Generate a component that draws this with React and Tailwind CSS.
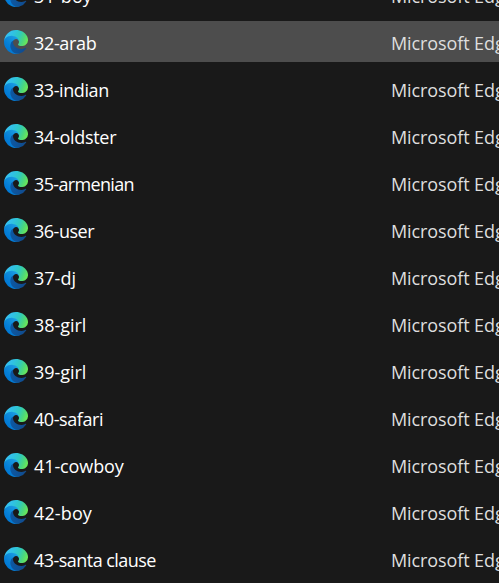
const rows = [
  { name: '31-boy', tracking: 'tracking-[0.13px]' },
  { name: '32-arab', tracking: 'tracking-[-0.35px]', selected: true },
  { name: '33-indian', tracking: 'tracking-[-0.42px]' },
  { name: '34-oldster', tracking: 'tracking-[-0.3px]' },
  { name: '35-armenian', tracking: 'tracking-[-0.65px]' },
  { name: '36-user', tracking: 'tracking-[-0.48px]' },
  { name: '37-dj', tracking: 'tracking-[0px]' },
  { name: '38-girl', tracking: 'tracking-[-0.05px]' },
  { name: '39-girl', tracking: 'tracking-[-0.05px]' },
  { name: '40-safari', tracking: 'tracking-[-0.42px]' },
  { name: '41-cowboy', tracking: 'tracking-[-0.1px]' },
  { name: '42-boy', tracking: 'tracking-[0.13px]' },
  { name: '43-santa clause', tracking: 'tracking-[-0.54px]' },
];

function EdgeDefs() {
  return (
    <svg className="absolute size-0" aria-hidden="true">
      <defs>
        <linearGradient id="edge-dark" gradientUnits="userSpaceOnUse" x1="63" y1="177" x2="241" y2="177">
          <stop offset="0" stopColor="#0c59a4" />
          <stop offset="1" stopColor="#114a8b" />
        </linearGradient>
        <linearGradient id="edge-blue" gradientUnits="userSpaceOnUse" x1="157" y1="105" x2="46" y2="226">
          <stop offset="0" stopColor="#1b9de2" />
          <stop offset="0.16" stopColor="#1595df" />
          <stop offset="0.67" stopColor="#0680d7" />
          <stop offset="1" stopColor="#0078d4" />
        </linearGradient>
        <linearGradient id="edge-teal" gradientUnits="userSpaceOnUse" x1="40" y1="50" x2="245" y2="135">
          <stop offset="0" stopColor="#35c1f1" />
          <stop offset="0.25" stopColor="#30c2e2" />
          <stop offset="0.55" stopColor="#2fc9bd" />
          <stop offset="0.8" stopColor="#4bd67e" />
          <stop offset="1" stopColor="#69e65a" />
        </linearGradient>
      </defs>
    </svg>
  );
}

function EdgeIcon() {
  return (
    <svg viewBox="4.6 4.9 256 256" className="size-6 shrink-0">
      <path fill="url(#edge-dark)" d="M235.68 195.46a93.73 93.73 0 0 1-10.54 4.71 101.87 101.87 0 0 1-35.9 6.46c-47.32 0-88.54-32.55-88.54-74.32A31.48 31.48 0 0 1 117.13 105c-42.8 1.8-53.8 46.4-53.8 72.53 0 73.88 68.09 81.37 82.76 81.37 7.91 0 19.84-2.3 27-4.56l1.31-.44a128.34 128.34 0 0 0 66.6-52.8 4 4 0 0 0-5.32-5.64z" />
      <path fill="url(#edge-blue)" d="M110.34 246.34A79.2 79.2 0 0 1 87.6 225a80.72 80.72 0 0 1 29.53-120c3.12-1.47 8.45-4.13 15.54-4a32.35 32.35 0 0 1 25.69 13 31.88 31.88 0 0 1 6.36 18.66c0-.21 24.46-79.6-80-79.6-43.9 0-80 41.66-80 78.21a130.15 130.15 0 0 0 12.11 56 128 128 0 0 0 156.38 67.11 75.55 75.55 0 0 1-62.78-8z" />
      <path fill="url(#edge-teal)" d="M156.94 153.78c-.81 1.05-3.3 2.5-3.3 5.66 0 2.61 1.7 5.12 4.72 7.23 14.38 10 41.49 8.68 41.56 8.68a59.56 59.56 0 0 0 30.27-8.35 61.38 61.38 0 0 0 30.43-52.88c.26-22.41-8-37.31-11.34-43.91C228.09 28.76 182.35 4.92 132.61 4.92a128 128 0 0 0-128 126.2c.48-36.54 36.8-66.05 80-66.05 3.5 0 23.46.34 42 10.07 16.34 8.58 24.9 18.94 30.85 29.21 6.18 10.67 7.28 24.15 7.28 29.52s-2.74 13.33-7.8 19.91z" />
    </svg>
  );
}

export default function App() {
  return (
    <div className="relative h-[583px] w-[499px] overflow-hidden bg-[#191919] font-['Open_Sans','Noto_Sans',sans-serif] text-[18px]">
      <EdgeDefs />
      <ul className="-mt-[26px] flex flex-col gap-1.5">
        {rows.map(({ name, tracking, selected }) => (
          <li
            key={name}
            className={`flex h-[41px] shrink-0 items-center whitespace-nowrap pl-1 pt-px ${selected ? 'bg-[#4d4d4d]' : ''}`}
          >
            <EdgeIcon />
            <span className={`ml-1.5 w-[357px] shrink-0 pt-px leading-6 text-white ${tracking}`}>{name}</span>
            <span className="shrink-0 pt-px leading-6 tracking-[-0.1px] text-[#dedede]">Microsoft Edge</span>
          </li>
        ))}
      </ul>
    </div>
  );
}
